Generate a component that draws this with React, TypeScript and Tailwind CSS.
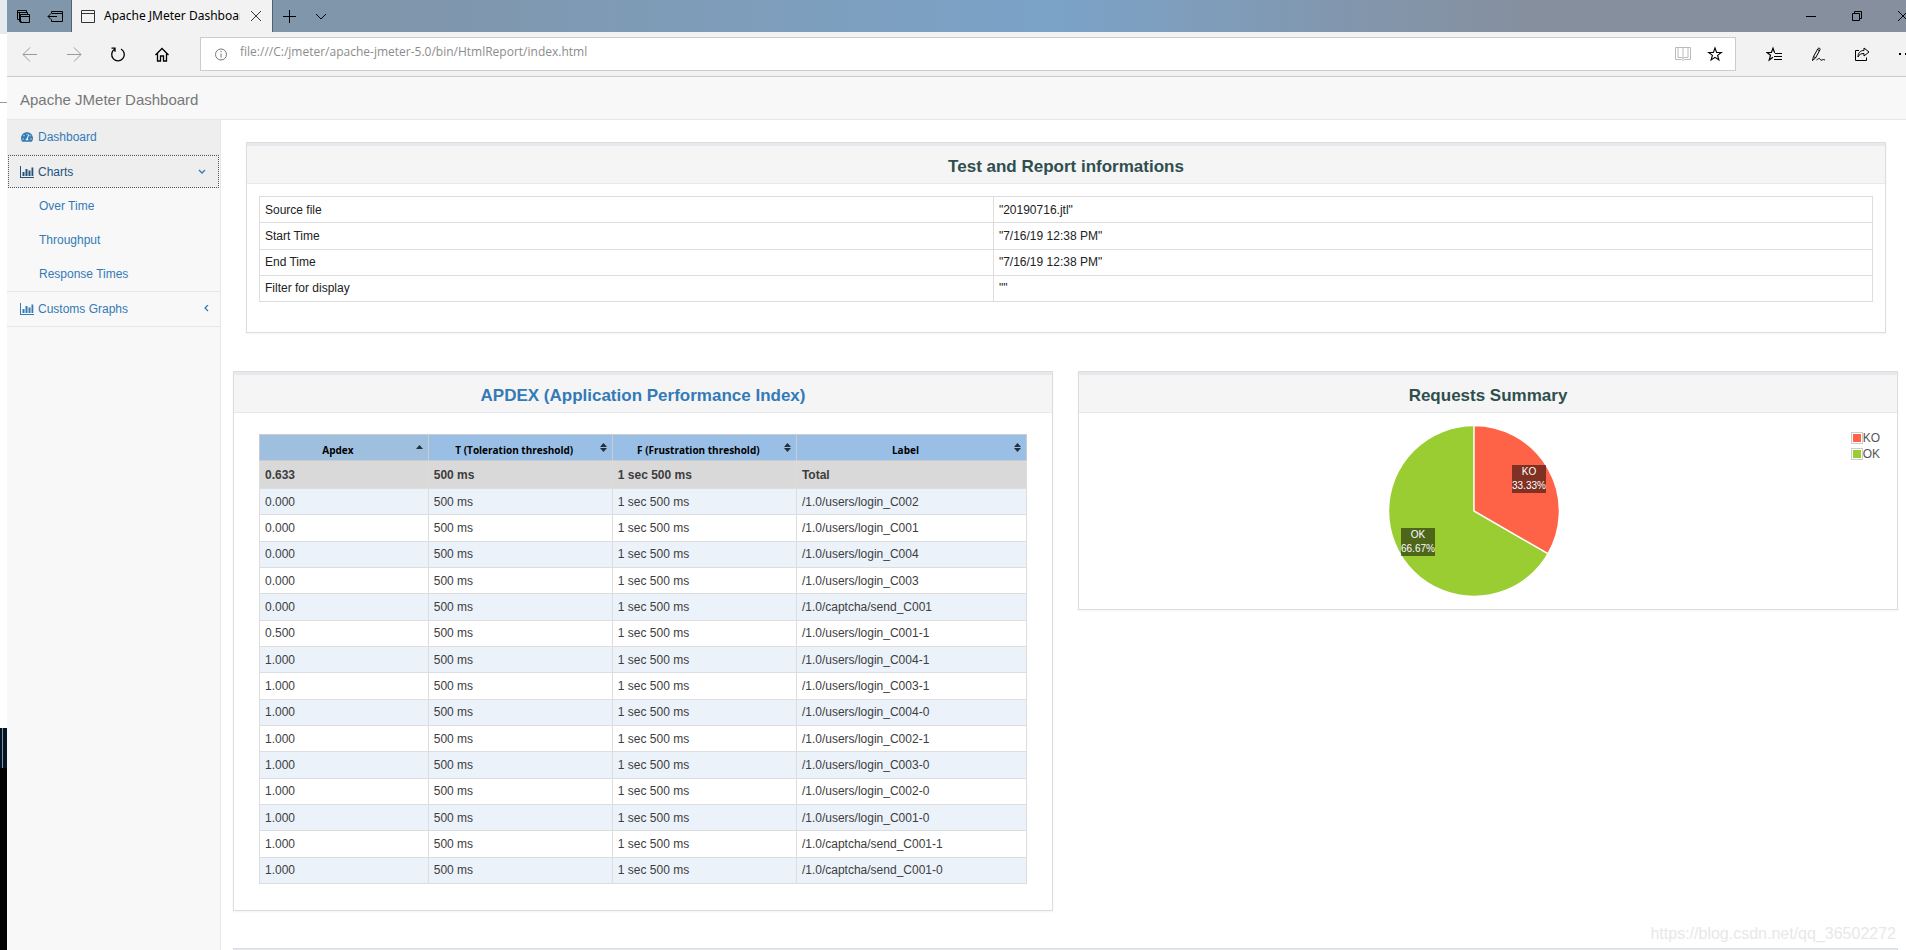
import React, { useState } from 'react';
import { FaTachometerAlt } from 'react-icons/fa';

interface ApdexRow {
  apdex: string;
  label: string;
}

const reportInfo = [
  ['Source file', '"20190716.jtl"'],
  ['Start Time', '"7/16/19 12:38 PM"'],
  ['End Time', '"7/16/19 12:38 PM"'],
  ['Filter for display', '""'],
];

const apdexRows: ApdexRow[] = [
  { apdex: '0.000', label: '/1.0/users/login_C002' },
  { apdex: '0.000', label: '/1.0/users/login_C001' },
  { apdex: '0.000', label: '/1.0/users/login_C004' },
  { apdex: '0.000', label: '/1.0/users/login_C003' },
  { apdex: '0.000', label: '/1.0/captcha/send_C001' },
  { apdex: '0.500', label: '/1.0/users/login_C001-1' },
  { apdex: '1.000', label: '/1.0/users/login_C004-1' },
  { apdex: '1.000', label: '/1.0/users/login_C003-1' },
  { apdex: '1.000', label: '/1.0/users/login_C004-0' },
  { apdex: '1.000', label: '/1.0/users/login_C002-1' },
  { apdex: '1.000', label: '/1.0/users/login_C003-0' },
  { apdex: '1.000', label: '/1.0/users/login_C002-0' },
  { apdex: '1.000', label: '/1.0/users/login_C001-0' },
  { apdex: '1.000', label: '/1.0/captcha/send_C001-1' },
  { apdex: '1.000', label: '/1.0/captcha/send_C001-0' },
];

function Icon({ label, className = 'w-11', children }: { label: string; className?: string; children: React.ReactNode }) {
  return (
    <button aria-label={label} className={`flex h-8 shrink-0 items-center justify-center ${className}`}>
      <svg className="shrink-0" width="16" height="16" viewBox="0 0 16 16" fill="none" stroke="currentColor">
        {children}
      </svg>
    </button>
  );
}

function TitleBar() {
  return (
    <div className="flex h-8 bg-linear-to-r from-[#8096ab] from-20% via-[#7ba3c8] via-55% to-[#858f9e] to-80% text-black">
      <Icon label="Tabs you've set aside" className="w-8">
        <path d="M4.5 11.5h-2v-9h9v2M2.5 4.500h7M6.500 13.500h-2v-7h1M5.500 6.500h9v8h-9zM5.500 8.500h9M4.500 13v-8.500h8v2" />
      </Icon>
      <Icon label="Set these tabs aside" className="w-8">
        <path d="M4.500 5v-1.500h11v10h-11v-2M4.500 5.500h11M1 8.500h9M4 5.500l-3 3 3 3" />
      </Icon>
      <div className="flex w-[202px] items-center border-x border-[#4f6272] bg-[#f2f2f2] pl-2">
        <svg className="shrink-0" width="16" height="16" viewBox="0 0 16 16" fill="none" stroke="#333">
          <path d="M1.500 2.500h13v12h-13zM1.500 5.500h13" />
        </svg>
        <span className="ml-2 w-[136px] shrink-0 overflow-hidden whitespace-nowrap text-xs">Apache JMeter Dashboard</span>
        <Icon label="Close tab" className="w-8 text-[#333]">
          <path d="M3 3l10 10M13 3L3 13" />
        </Icon>
      </div>
      <Icon label="New tab" className="w-8">
        <path d="M2 8.500h13M8.500 2v13" />
      </Icon>
      <Icon label="Show tab previews" className="w-8">
        <path d="M3 6l5 5 5-5" />
      </Icon>
      <div className="-mr-5 ml-auto flex">
        <Icon label="Minimize" className="w-[46px]">
          <path d="M3 8.500h10" />
        </Icon>
        <Icon label="Restore" className="w-[46px]">
          <path d="M3.500 5.500h7v7h-7zM5.500 5.500v-2h7v7h-2" />
        </Icon>
        <Icon label="Close" className="w-[46px]">
          <path d="M3 3l10 10M13 3L3 13" />
        </Icon>
      </div>
    </div>
  );
}

function AddressBar() {
  const [url, setUrl] = useState('file:///C:/jmeter/apache-jmeter-5.0/bin/HtmlReport/index.html');

  return (
    <div className="flex h-[45px] items-center border-b border-[#ccc] bg-[#f2f2f2] pl-px text-black">
      <Icon label="Back" className="w-11 text-[#999]">
        <path d="M1 8.500h14M8 1.500l-7 7 7 7" />
      </Icon>
      <Icon label="Forward" className="w-11 text-[#999]">
        <path d="M1 8.500h14M8 1.500l7 7-7 7" />
      </Icon>
      <Icon label="Refresh">
        <path strokeWidth="1.300" d="M4.500 3.300a6.300 6.300 0 1 0 6.500-.3M1.500 2.200h3.500v3.500" />
      </Icon>
      <Icon label="Home">
        <path strokeWidth="1.300" d="M1.500 9l6.500-6.500 6.500 6.500M3.500 7.500v7.500h3v-5h3v5h3v-7.500" />
      </Icon>
      <div className="ml-4 flex h-[34px] flex-1 items-center border border-[#ccc] bg-white pl-3">
        <svg className="shrink-0" width="16" height="16" viewBox="0 0 16 16" fill="none" stroke="#777">
          <circle cx="8" cy="8.500" r="5.500" />
          <path d="M8 7.500v4M8 5v1.200" />
        </svg>
        <input
          aria-label="Address"
          className="mb-1 ml-[11px] flex-1 bg-transparent font-['Open_Sans',sans-serif] text-xs text-[#8c8c8c] outline-none"
          value={url}
          onChange={e => setUrl(e.target.value)}
        />
        <Icon label="Reading view" className="w-8 text-[#bbb]">
          <path d="M.5 1.500h15v12h-6l-1.500 1-1.500-1h-6zM3 1.500v10h4l1 1 1-1h4v-10M8 2v11" />
        </Icon>
        <Icon label="Add to favorites" className="mr-1 w-8">
          <path strokeWidth="1.100" d="M8 2l1.600 4.500h4.700l-3.700 2.900 1.300 4.600-3.900-2.700-3.900 2.700 1.300-4.600-3.700-2.900h4.700z" />
        </Icon>
      </div>
      <div className="-mr-[22px] ml-4 flex">
        <Icon label="Favorites hub">
          <path strokeWidth="1.200" d="M9 6.500h-.5L7 2.300 5.400 6.500H1l3.500 2.800-1.300 4.600L7 11.200M9 7.500h7M8 10.500h8M8 13.500h8" />
        </Icon>
        <Icon label="Add notes">
          <path d="M2.500 14.500l1-4 4.500-8c1-1 2.500 0 2 1.200l-4.500 8.300L2.500 14.500zM3.500 10.500l2 1.200M7.500 3.500l2 1.200M6.500 14c1.500-1 2.500-2 3.200-1.300s.8 2 2.300 1.300 1.500-.5 3 0" />
        </Icon>
        <Icon label="Share">
          <path d="M5 4.500H1.500v10h11v-3M10 2l5 4-5 4v-2.500c-3 0-5 1-6 3.500 0-4 2-6.500 6-6.500z" />
        </Icon>
        <Icon label="Settings and more">
          <path stroke="none" fill="currentColor" d="M1 7h2v2H1zM7 7h2v2H7zM13 7h2v2h-2z" />
        </Icon>
      </div>
    </div>
  );
}

function BarChartIcon() {
  return (
    <svg width="14" height="12" viewBox="0 0 14 12" fill="currentColor">
      <path d="M0 0h1v11h13v1H0zM2.500 6h2v4h-2zM5.500 3h2v7h-2zM8.500 4.500h2v5.500h-2zM11.500 1.500h1.800v8.500h-1.800z" />
    </svg>
  );
}

function Sidebar() {
  const [open, setOpen] = useState(true);

  return (
    <nav className="w-[214px] shrink-0 border-r border-[#e7e7e7] bg-[#f8f8f8] text-xs text-[#337ab7]">
      <ul>
        <li className="border-b border-[#e7e7e7]">
          <a href="#dashboard" className="flex h-[34px] items-center gap-[5px] bg-[#eee] px-[14px]">
            <FaTachometerAlt size={12} />
            Dashboard
          </a>
        </li>
        <li className="border-b border-[#e7e7e7]">
          <div className="px-px">
            <button
              className="flex h-[33px] w-full items-center gap-1 border border-dotted border-[#555] bg-[#eee] pr-3 pl-[11px] text-[#23527c]"
              aria-expanded={open}
              onClick={() => setOpen(!open)}
            >
              <BarChartIcon />
              Charts
              <svg className="ml-auto text-[#337ab7]" width="8" height="8" viewBox="0 0 8 8" fill="none" stroke="currentColor">
                <path strokeWidth="1.300" d="M1 2l3 3 3-3" />
              </svg>
            </button>
          </div>
          {open && (
            <ul className="pt-px">
              {['Over Time', 'Throughput', 'Response Times'].map(name => (
                <li key={name}>
                  <a href="#charts" className="flex h-[34px] items-center pl-8">{name}</a>
                </li>
              ))}
            </ul>
          )}
        </li>
        <li className="border-b border-[#e7e7e7]">
          <button className="flex h-[34px] w-full items-center gap-1 px-[13px]">
            <BarChartIcon />
            Customs Graphs
            <svg className="-mr-1 ml-auto" width="8" height="8" viewBox="0 0 8 8" fill="none" stroke="currentColor">
              <path strokeWidth="1.300" d="M5 0L2 3l3 3" />
            </svg>
          </button>
        </li>
      </ul>
    </nav>
  );
}

function Panel({ title, className = '', children }: { title?: React.ReactNode; className?: string; children?: React.ReactNode }) {
  return (
    <section className={`border border-[#ddd] bg-white shadow-xs ${className}`}>
      <h2 className="h-[41px] border-t-3 border-b border-[#e6e9ed] bg-[#f5f5f5] text-center text-[17px] leading-[42px] font-bold text-[#2f4f4f]">
        {title}
      </h2>
      {children}
    </section>
  );
}

function SortIcon({ sorted = false }: { sorted?: boolean }) {
  return (
    <svg width="7" height="9" viewBox="0 0 7 9" fill="#233035">
      {sorted ? <path d="M0 6L3.500 2 7 6z" /> : <path d="M0 4L3.500 0 7 4zM0 5h7L3.500 9z" />}
    </svg>
  );
}

function ApdexTable() {
  const headers = ['Apdex', 'T (Toleration threshold)', 'F (Frustration threshold)', 'Label'];
  const cell = 'border border-[#ddd] px-[5px] py-1';

  return (
    <table className="h-[450px] w-full table-fixed border-collapse text-xs text-[#3d3d3d]">
      <colgroup>
        <col className="w-[22%]" />
        <col className="w-[24%]" />
        <col className="w-[24%]" />
        <col className="w-[30%]" />
      </colgroup>
      <thead>
        <tr>
          {headers.map((h, i) => (
            <th key={h} className={`h-[26px] border border-[#ccc] p-0 ${i === 0 ? 'bg-[#9fbfdf]' : 'bg-[#99bfe6]'}`}>
              <button className="flex w-full items-center pr-[5px] font-['Open_Sans',sans-serif] text-[10px] leading-4 font-bold text-black">
                <span className="flex-1 pt-1">{h}</span>
                <SortIcon sorted={i === 0} />
              </button>
            </th>
          ))}
        </tr>
      </thead>
      <tbody>
        <tr className="h-7 bg-[#d9d9d9] font-bold">
          <td className={cell}>0.633</td>
          <td className={cell}>500 ms</td>
          <td className={cell}>1 sec 500 ms</td>
          <td className={cell}>Total</td>
        </tr>
        {apdexRows.map(row => (
          <tr key={row.label} className="even:bg-[#ebf2fa]">
            <td className={cell}>{row.apdex}</td>
            <td className={cell}>500 ms</td>
            <td className={cell}>1 sec 500 ms</td>
            <td className={cell}>{row.label}</td>
          </tr>
        ))}
      </tbody>
    </table>
  );
}

function RequestsPie() {
  return (
    <div className="relative flex h-[196px] justify-center pt-3">
      <div className="relative -ml-7 size-[172px]">
        <svg width="172" height="172" viewBox="-86 -86 172 172" stroke="#fff" strokeWidth="1.500">
          <circle r="85.500" fill="#9acd32" />
          <path d="M0 0V-85.500A85.500 85.500 0 0 1 74 42.750z" fill="#ff6347" />
        </svg>
        <span className="absolute top-[40px] left-[124px] bg-black/50 text-center text-[10px] leading-[14px] text-white">KO<br />33.33%</span>
        <span className="absolute top-[103px] left-[13px] bg-black/50 text-center text-[10px] leading-[14px] text-white">OK<br />66.67%</span>
      </div>
      <ul className="absolute top-[17px] right-[17px] text-xs leading-4 text-[#545454]">
        <li className="flex items-center">
          <span className="h-3 w-3 border border-[#ccc] bg-[#ff6347] bg-clip-content p-px" />KO
        </li>
        <li className="flex items-center">
          <span className="h-3 w-3 border border-[#ccc] bg-[#9acd32] bg-clip-content p-px" />OK
        </li>
      </ul>
    </div>
  );
}

export default function App() {
  return (
    <div className="flex h-screen overflow-hidden bg-white font-['Liberation_Sans',Arial,sans-serif]">
      {/* window behind the browser */}
      <div className="flex w-[7px] shrink-0 flex-col">
        <div className="h-[34px] bg-[#e4eaee]" />
        <div className="h-[69px] border-b border-[#999]" />
        <div className="flex-1" />
        <div className="h-10 bg-[#001426] pl-0.5">
          <div className="h-full w-px bg-[#8a929a]" />
        </div>
        <div className="h-[182px] bg-black" />
      </div>

      <div className="flex min-w-0 flex-1 flex-col overflow-hidden">
        <header className="shrink-0 font-['Noto_Sans',sans-serif]">
          <TitleBar />
          <AddressBar />
        </header>
        <div className="flex h-[43px] shrink-0 items-center border-b border-[#e7e7e7] bg-[#f8f8f8] px-[13px] pt-1">
          <a href="#top" className="text-[15px] text-[#777]">Apache JMeter Dashboard</a>
        </div>
        <div className="flex min-h-0 flex-1">
          <Sidebar />
          <main className="min-w-0 flex-1 overflow-hidden pt-[22px] pr-2 pl-3">
            <Panel title="Test and Report informations" className="mr-3 ml-[13px] h-[191px]">
              <div className="px-3 pt-3">
                <table className="h-[106px] w-full table-fixed border-collapse text-xs text-[#222]">
                  <tbody>
                    {reportInfo.map(([name, value]) => (
                      <tr key={name}>
                        <td className="w-[45.5%] border border-[#ddd] px-[5px] py-1">{name}</td>
                        <td className="border border-[#ddd] px-[5px] py-1">{value}</td>
                      </tr>
                    ))}
                  </tbody>
                </table>
              </div>
            </Panel>

            <div className="mt-[38px] grid grid-cols-2 items-start gap-[25px]">
              <Panel title={<a href="#apdex" className="text-[#337ab7]">APDEX (Application Performance Index)</a>}>
                <div className="px-[25px] pt-[21px] pb-[26px]">
                  <ApdexTable />
                </div>
              </Panel>
              <Panel title="Requests Summary">
                <RequestsPie />
              </Panel>
            </div>

            <Panel className="mt-[37px]" />
          </main>
        </div>
      </div>

      <div className="absolute right-2.5 bottom-1 text-base leading-6 text-[#e8e8e8]">https://blog.csdn.net/qq_36502272</div>
    </div>
  );
}
